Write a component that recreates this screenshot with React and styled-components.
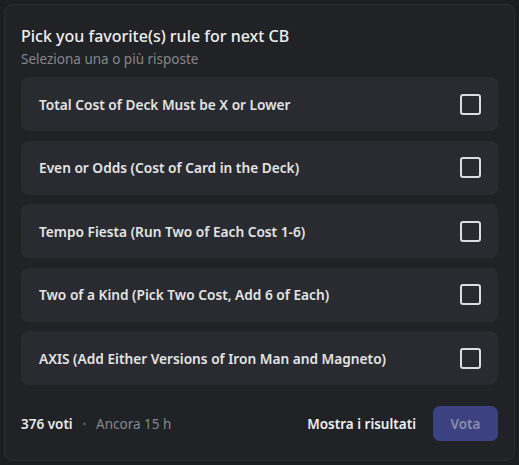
import styled, { createGlobalStyle } from "styled-components"

const GlobalStyle = createGlobalStyle`
    html, body {
        margin: 0;
        padding: 0;
        background: #1c1d21;
    }
    body {
        font-family: "Noto Sans", "Open Sans", sans-serif;
    }
`

const options = [
    "Total Cost of Deck Must be X or Lower",
    "Even or Odds (Cost of Card in the Deck)",
    "Tempo Fiesta (Run Two of Each Cost 1-6)",
    "Two of a Kind (Pick Two Cost, Add 6 of Each)",
    "AXIS (Add Either Versions of Iron Man and Magneto)",
]

export default function App() {
    return (
        <Page>
            <GlobalStyle />
            <Card>
                <Title>Pick you favorite(s) rule for next CB</Title>
                <Subtitle>Seleziona una o più risposte</Subtitle>
                <OptionList>
                    {options.map((text) => (
                        <Option key={text}>
                            <span>{text}</span>
                            <Checkbox />
                        </Option>
                    ))}
                </OptionList>
                <Footer>
                    <Meta>
                        <strong>376 voti</strong>
                        <Dot>•</Dot>
                        <span>Ancora 15 h</span>
                    </Meta>
                    <Actions>
                        <ShowResults>Mostra i risultati</ShowResults>
                        <VoteButton disabled>Vota</VoteButton>
                    </Actions>
                </Footer>
            </Card>
        </Page>
    )
}

const Page = styled.div`
    width: 519px;
    height: 465px;
    padding: 4px;
    box-sizing: border-box;
`

const Card = styled.div`
    height: 100%;
    box-sizing: border-box;
    background: #212226;
    border: 1px solid #2d2e33;
    border-radius: 9px;
    padding: 20px 16px 0 16px;
    display: flex;
    flex-direction: column;
`

const Title = styled.div`
    font-size: 16px;
    font-weight: 500;
    color: #eeeff1;
    line-height: 22px;
`

const Subtitle = styled.div`
    font-size: 13.5px;
    color: #84868c;
    line-height: 18px;
    margin-top: 3px;
`

const OptionList = styled.div`
    display: flex;
    flex-direction: column;
    gap: 9.5px;
    margin-top: 9px;
`

const Option = styled.div`
    height: 54px;
    box-sizing: border-box;
    background: #2a2b30;
    border-radius: 8px;
    padding: 0 17px 0 18px;
    display: flex;
    align-items: center;
    justify-content: space-between;
    span {
        font-size: 13.7px;
        font-weight: 600;
        color: #e3e4e6;
    }
`

const Checkbox = styled.div`
    width: 21px;
    height: 21px;
    box-sizing: border-box;
    border: 2px solid #dcdde0;
    border-radius: 3px;
`

const Footer = styled.div`
    display: flex;
    align-items: center;
    justify-content: space-between;
    margin-top: 21px;
`

const Meta = styled.div`
    display: flex;
    align-items: center;
    gap: 10px;
    font-size: 13.5px;
    color: #85878d;
    strong {
        font-weight: 600;
        color: #e8e9eb;
    }
`

const Dot = styled.span`
    font-size: 9px;
    color: #6d6f75;
`

const Actions = styled.div`
    display: flex;
    align-items: center;
    gap: 17px;
`

const ShowResults = styled.span`
    font-size: 13.5px;
    font-weight: 600;
    color: #eeeff1;
`

const VoteButton = styled.button`
    width: 65px;
    height: 35px;
    border: none;
    border-radius: 7px;
    background: #3c4181;
    color: #8a8cad;
    font-family: inherit;
    font-size: 13.5px;
    font-weight: 600;
`
